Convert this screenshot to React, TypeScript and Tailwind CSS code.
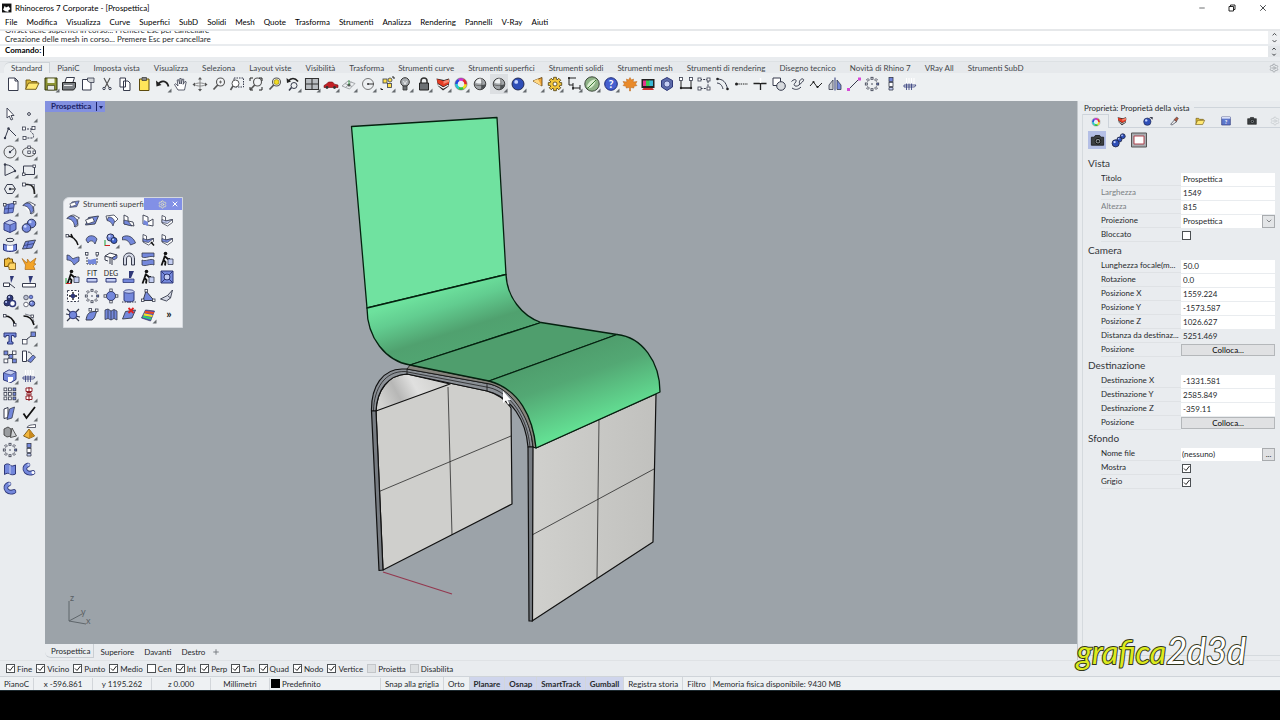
import React, { useState } from 'react';
import { Minus, X, Settings, ChevronDown, ChevronUp, Plus } from 'lucide-react';

const menus = [
  'File', 'Modifica', 'Visualizza', 'Curve', 'Superfici', 'SubD', 'Solidi', 'Mesh', 'Quote', 'Trasforma',
  'Strumenti', 'Analizza', 'Rendering', 'Pannelli', 'V-Ray', 'Aiuti',
];

const toolTabs = [
  'Standard', 'PianiC', 'Imposta vista', 'Visualizza', 'Seleziona', 'Layout viste', 'Visibilità', 'Trasforma',
  'Strumenti curve', 'Strumenti superfici', 'Strumenti solidi', 'Strumenti mesh', 'Strumenti di rendering',
  'Disegno tecnico', 'Novità di Rhino 7', 'VRay All', 'Strumenti SubD',
];

type Tool = { name: string; art: React.ReactNode; more?: boolean; active?: boolean };

const K = '#363b4c';
const B = '#7488dc';
const L = '#c3cdf2';
const N = '#2f3878';

const Sq = ({ x, y, s = 3, f = '#fff' }: { x: number; y: number; s?: number; f?: string }) => (
  <rect x={x} y={y} width={s} height={s} fill={f} stroke={K} strokeWidth=".8" />
);

const hues = ['#f0e020', '#30c840', '#20c8d8', '#2848e0', '#d030d0', '#e82828'];
const Wheel = () => (
  <>
    {hues.map((hue, i) => (
      <circle key={hue} cx="9" cy="9" r="4.6" fill="none" stroke={hue} strokeWidth="2.6" pathLength="6"
        strokeDasharray="1.05 4.95" strokeDashoffset={-i} />
    ))}
    <circle cx="9" cy="9" r="6.1" fill="none" stroke="#444" strokeWidth=".4" />
  </>
);

const Ball = ({ cx = 9, cy = 9, r = 6, f = '#2f4fb8', hi = '#c8d6ff' }: { cx?: number; cy?: number; r?: number; f?: string; hi?: string }) => (
  <>
    <circle cx={cx} cy={cy} r={r} fill={f} stroke="#1c2344" strokeWidth=".9" />
    <circle cx={cx - r * 0.3} cy={cy - r * 0.35} r={r * 0.32} fill={hi} />
  </>
);

const GreyBall = () => (
  <>
    <circle cx="9" cy="9" r="5.800" fill="#a2a6a9" stroke="#333" strokeWidth=".9" />
    <path d="M4.500 7.500a5 5 0 0 1 6.500-3.700v4.200c-2 .8-4.500.8-6.500-.5z" fill="#eef0f1" />
    <path d="M3.200 9.500c3 1.500 8.500 1.500 11.600 0M10 3.200c1.200 3 1.200 8.500 0 11.600" fill="none" stroke="#555" strokeWidth=".7" />
    <path d="M10.500 10.300 14.500 9.800a5.500 5.500 0 0 1-4.200 4.700z" fill="#4d5154" />
  </>
);

const Lens = () => (
  <>
    <circle cx="10.500" cy="7" r="4" fill="#f2f4f6" stroke="#555" strokeWidth="1.100" />
    <path d="M7.700 10 3.500 14.500" stroke="#555" strokeWidth="1.700" />
  </>
);

const Gear = () => (
  <>
    {[0, 45, 90, 135].map((a) => (
      <path key={a} d="M7.600 2.300h2.800v13.400H7.600z" fill="#f2c53a" stroke="#4a3a10" strokeWidth=".8" transform={`rotate(${a} 9 9)`} />
    ))}
    <circle cx="9" cy="9" r="4.600" fill="#f2c53a" />
    <circle cx="9" cy="9" r="2" fill="#fff" stroke="#4a3a10" strokeWidth=".8" />
  </>
);

const Camera = () => (
  <>
    <path d="M2.500 5.500h3l1.200-1.800h4.600l1.200 1.800h3v8.500h-13z" fill="#3b3f42" stroke="#111" strokeWidth=".8" />
    <circle cx="9.500" cy="9.700" r="3" fill="#8a9094" stroke="#111" />
    <circle cx="9.500" cy="9.700" r="1.300" fill="#16191b" />
  </>
);

const Folder = () => (
  <>
    <path d="M3 14V5h4l1.500 1.500H14V8" fill="#d9b93a" stroke="#6a5410" strokeWidth=".9" />
    <path d="M2.500 14.300 5.500 8h10.500l-3 6.300z" fill="#ffe873" stroke="#6a5410" strokeWidth=".9" />
  </>
);

const Wedge = () => (
  <>
    <path d="M2.500 3.500 10 5l5-1.500.5 2.500-1 5.500-5.500 4-5-4.500z" fill="#2b2626" />
    <path d="m3 4 6.500 2L15 4.500v4l-5.500 3L3.500 8z" fill="#e43d25" />
    <path d="M9.500 6 15 4.500v2.300L9.500 9z" fill="#f58a74" />
    <path d="m4 9.800 5.200 3.200 5-2.800" fill="none" stroke="#fff" strokeWidth="1.100" />
  </>
);

const PolarArray = () => (
  <>
    {[0, 45, 90, 135, 180, 225, 270, 315].map((a) => (
      <rect key={a} x="8" y="2.300" width="2" height="2" fill={a === 90 ? B : '#fff'} stroke={K} strokeWidth=".8"
        transform={`rotate(${a} 9 9)`} />
    ))}
    <circle cx="9" cy="9" r=".8" fill={K} />
  </>
);

const Column = () => (
  <>
    <Sq x={7} y={2.500} s={4} f={B} />
    <Sq x={7} y={7.500} s={4} />
    <path d="M7 12.500h4v2.500H7z" fill={L} stroke={K} strokeWidth=".8" />
  </>
);

// bent surface patch shared by most of the surface tools
const Sheet = ({ f = B }: { f?: string }) => (
  <>
    <path d="M3 6.500C5 4 7.500 3 10 3l5.500 3-2 1.500.5 6-3 1.500" fill="#fff" stroke={K} strokeWidth=".8" />
    <path d="M3 6.500C4.500 4.500 6.500 4 8 4c3 .5 5.500 3.500 5.500 8l-3 3c0-4.500-2.500-8-7.500-8.500z" fill={f} stroke={K} strokeWidth=".8" />
  </>
);

const Plane = () => (
  <path d="m2.500 13 3-7.500 10-1.500-3.500 8z" fill={B} stroke={K} strokeWidth=".9" />
);

const Seat = ({ f = B }: { f?: string }) => (
  <>
    <path d="M4 3.500 7.500 5v4l7-1.500v3l-5 3.500L4 11z" fill="#fff" stroke={K} strokeWidth=".8" />
    <path d="M4 7.500 8 9l6.500-1.500-5 4L4 10.500z" fill={f} stroke={K} strokeWidth=".7" />
  </>
);

const Walker = () => (
  <>
    <circle cx="7.500" cy="3.500" r="1.800" fill="#111" />
    <path d="M7 5.500 5.500 10l2 2L7 15.500M5.500 10 3.500 15.500M7 6.500l3 2.500h2" fill="none" stroke="#111" strokeWidth="1.800" />
    <path d="M10 9h5v5.500h-5z" fill={L} stroke={K} strokeWidth=".8" />
  </>
);

const Pipe = ({ open }: { open?: boolean }) => (
  <>
    <path d="M8 5C4.500 6 4 9.500 6 11.500S10.500 13.500 13 12.500" fill="none" stroke={N} strokeWidth="4.600" strokeLinecap="round" />
    <path d="M8 5C4.500 6 4 9.500 6 11.500S10.500 13.500 13 12.500" fill="none" stroke={B} strokeWidth="3" strokeLinecap="round" />
    <circle cx="8.500" cy="4.700" r="1.200" fill={L} />
    {open && <circle cx="13" cy="12.500" r="1.500" fill="#fff" />}
  </>
);

const Prongs = () => (
  <>
    <path d="M5.500 3v8M8 3v8M10.500 3v8M13 3v8" stroke="#fff" strokeWidth="1.100" />
    <path d="M3 10h12l-1.500 2H3zM5.500 8.500V15M8 8.500V15M10.500 8.500V15" fill="none" stroke={N} strokeWidth=".8" />
  </>
);

const line = { fill: 'none', stroke: K, strokeWidth: 1 };

const standardTools: Tool[] = [
  { name: 'Nuovo', art: <path d="M4.500 3H11l3 3v9.500H4.500zM11 3v3h3" fill="#fff" stroke={K} /> },
  { name: 'Apri', art: <Folder /> },
  { name: 'Salva', more: true, art: <><path d="M3 3h12v12H3z" fill="#8b9232" stroke="#33360f" /><path d="M5.500 3.500h7V8h-7z" fill="#f1f3e4" /><path d="M5.500 10.500h7V15h-7z" fill="#e5e7e9" stroke="#33360f" strokeWidth=".6" /></> },
  { name: 'Stampa', art: <><path d="M5 7 6.500 2.500h8L13 7" fill="#fff" stroke={K} /><path d="M2.500 7.500h13v5l-2 2.500h-11z" fill="#7c8084" stroke="#222" /><path d="M4 10.500h8.500" stroke="#eee" /></> },
  { name: 'Proprietà documento', art: <><path d="M3.500 4.500h8.500V15H3.500z" fill="#fff" stroke={K} /><path d="M8.500 3h6.500v4.500h-4L8.500 6z" fill="#d3d6d9" stroke={K} strokeWidth=".8" /></> },
  { name: 'Taglia', art: <><path d="m6 3 5 9.500M12 3 7 12.500" stroke="#555" strokeWidth="1.200" /><circle cx="6" cy="13.500" r="1.200" {...line} /><circle cx="12" cy="13.500" r="1.200" {...line} /></> },
  { name: 'Copia', art: <path d="M4 3h5.500v9H4zM7.500 6h4.500l2 2v7.500H7.500z" fill="#fff" stroke={K} /> },
  { name: 'Incolla', art: <><path d="M4.500 4h9.500v11.500H4.500z" fill="#ffe55a" stroke="#5c4a0c" /><path d="M7 2.500h4.500v3H7z" fill="#888" stroke="#333" strokeWidth=".7" /></> },
  { name: 'Annulla', more: true, art: <><path d="M4 9.500c3-5 9-4 10.500 2" fill="none" stroke="#222" strokeWidth="1.800" /><path d="m2 5.500.5 6 5-1.500z" fill="#222" /></> },
  { name: 'Panoramica', art: <path d="M6 15 2.500 9.500l1.300-.8L6 11 5.200 5l1.300-.4L7.800 9V3.500h1.400V9l1.300-5 1.300.3-.6 5 1.800-3 1.200.6L12.500 15z" fill="#fff" stroke={K} strokeWidth=".8" /> },
  { name: 'Ruota vista', art: <><path d="M3 9.500c3-2 9-2 12 0-3 2-9 2-12 0zM9 4v11" {...line} stroke="#888" /><path d="m7 4.500 2-2.500 2 2.500zM7 14l2 2.500 2-2.500zM4 7.500l-2.500 2 2.500 2zM14 7.500l2.500 2-2.500 2z" fill="#555" /></> },
  { name: 'Zoom dinamico', art: <><Lens /><path d="M9 7h3M10.500 5.500v3" stroke="#555" strokeWidth=".8" /></> },
  { name: 'Zoom finestra', art: <><path d="M6 3h9.500v9H6z" {...line} strokeDasharray="1.500 1" /><circle cx="7.500" cy="8.500" r="3.500" fill="#fff" stroke="#555" /><path d="m5 11-2.500 4" stroke="#555" strokeWidth="1.600" /></> },
  { name: 'Zoom estensione', art: <><Lens /><path d="M3 6V3h3M12 3h3v3M15 12v3h-3M3 12v3h3" {...line} stroke="#222" /></> },
  { name: 'Zoom selezionati', art: <><Lens /><circle cx="10.500" cy="7" r="2.500" fill="#f2dc20" stroke="#8a7a10" strokeWidth=".6" /></> },
  { name: 'Annulla vista', more: true, art: <><path d="M4 6.500c3-4 7-4 10 0" {...line} stroke="#222" strokeWidth="1.600" /><path d="m2.500 3 .5 5 4-1.500z" fill="#222" /><circle cx="10" cy="10.500" r="3" {...line} /><path d="m7.500 12.500-2.500 3" {...line} strokeWidth="1.500" /></> },
  { name: '4 viste', more: true, art: <path d="M2.500 3.500h13v11h-13zM9 3.500v11M2.500 9h13" fill="#b9bdc1" stroke="#333" strokeWidth="1.100" /> },
  { name: 'Visualizza auto', more: true, art: <><path d="M2 10.500 4.500 9l2-2h4l2 2.200 3.500.8v2.500H2z" fill="#c41f25" stroke="#6d0d10" strokeWidth=".6" /><circle cx="5" cy="12.500" r="1.400" fill="#333" /><circle cx="12.500" cy="12.500" r="1.400" fill="#333" /></> },
  { name: 'Piano di costruzione', more: true, art: <><path d="m2 11 6-5 7 2.500L9.500 14zM5 8.500l7 3M11.500 7l-6 5.500" fill="none" stroke="#9a9da0" strokeWidth=".9" /><circle cx="9" cy="10" r="1.500" fill="#555" /><path d="M9 10V5" stroke="#1b8f2c" strokeWidth=".7" /></> },
  { name: 'Cerchio', more: true, art: <><circle cx="9" cy="9" r="5.500" fill="none" stroke="#777" /><path d="M9 9h6" stroke="#333" /><circle cx="9" cy="9" r="1" fill="#333" /></> },
  { name: 'Osnap', more: true, art: <><Sq x={5} y={4} s={4} f="#ffe04a" /><Sq x={9.500} y={8.500} s={4} f="#ffe04a" /><circle cx="12" cy="5" r="2" fill="#ffe04a" stroke={K} strokeWidth=".8" /><path d="M3 13v1.500h2M14 2h2v2" {...line} stroke="#222" /></> },
  { name: 'Nascondi', more: true, art: <><circle cx="9" cy="7" r="4.300" fill="#a9adb1" stroke="#333" /><path d="M7 11h4v4H7z" fill="#6b6f72" stroke="#333" strokeWidth=".8" /><path d="M7.500 6 9 9.500 10.500 6" {...line} stroke="#fff" strokeWidth=".7" /></> },
  { name: 'Blocca', more: true, art: <><path d="M6 8V6c0-4 6-4 6 0v2" fill="none" stroke="#333" strokeWidth="1.500" /><path d="M4.500 8h9v7h-9z" fill="#6c7074" stroke="#222" /></> },
  { name: 'Livelli', more: true, art: <Wedge /> },
  { name: 'Proprietà', more: true, art: <Wheel /> },
  { name: 'Ombreggia', art: <GreyBall /> },
  { name: 'Vista ombreggiata', more: true, active: true, art: <GreyBall /> },
  { name: 'Render', more: true, art: <Ball /> },
  { name: 'Faretto', more: true, art: <><path d="m6 6 9-3.500V11z" fill="#f0a83c" stroke="#5c3a08" strokeWidth=".8" /><path d="m6 6 5-2 3.500 7z" fill="#ffd987" /></> },
  { name: 'Opzioni', more: true, art: <Gear /> },
  { name: 'Quote', more: true, art: <><path d="M3 3h8M4 3v7h4M8 8v7M15 10v5M8 13h7" {...line} stroke="#222" /><circle cx="4" cy="3" r="1" fill="#222" /><circle cx="8" cy="13" r="1" fill="#222" /></> },
  { name: 'Grasshopper', more: true, art: <><circle cx="9" cy="9" r="7.200" fill="#8fb287" stroke="#3e4a3c" /><path d="M4 11c2-5 5-6.500 9-6.500-1 5-3 8-7.500 9z" fill="#d9edcf" /><path d="M4.500 13.500 13 5" stroke="#3c7a34" /></> },
  { name: 'Aiuti', more: true, art: <><circle cx="9" cy="9" r="6.300" fill="#4560cf" stroke="#1c2a78" /><text x="9" y="13" textAnchor="middle" fontSize="11" fontWeight="700" fill="#fff">?</text></> },
  { name: 'V-Ray', art: <path d="m9 2.500 1.500 2.500 2-1-.3 3L16 6.500 14.500 9l1.500 1.500-3.500 1 .5 1.500-3.500-.5V16h-1v-3.500L5 13l.5-1.500-3.500-1L3.500 9 2 6.500 5.800 7l-.3-3 2 1z" fill="#e98a2a" stroke="#b8641a" strokeWidth=".5" /> },
  { name: 'Finestra di rendering', art: <><path d="M2.500 4h13v9h-13z" fill="#222" /><path d="M4 5.500h3.500v5.500H4z" fill="#e6338e" /><path d="M7 5.500h4v5.500H7z" fill="#38c850" /><path d="M10.500 5.500H14v5.500h-3.500z" fill="#38b8d8" /><path d="M3 15l1.500-2h9l1.500 2z" fill="#c33" /></> },
  { name: 'Blocco', art: <><path d="m9 2.500 5.500 3v6.500L9 15.500 3.500 12V5.500z" fill="#5d6cab" stroke={N} /><circle cx="9" cy="9" r="3" fill="#c7d0f4" stroke={N} strokeWidth=".7" /></> },
  { name: 'Quota lineare', art: <><path d="M4 4v9h10V4M4 13h10" {...line} stroke="#222" /><Sq x={2.500} y={2.500} /><Sq x={12.500} y={2.500} /><circle cx="4" cy="13" r="1.200" fill="#222" /><circle cx="14" cy="13" r="1.200" fill="#222" /></> },
  { name: 'Punti di controllo', art: <><path d="M5 4.500h8v9H5" {...line} strokeDasharray="2 1.200" /><Sq x={3} y={3} /><Sq x={12} y={3} /><Sq x={3} y={12} /><Sq x={12} y={12} /></> },
  { name: 'Raccorda', art: <><path d="M3 4c6 0 9 3 10.500 10M3 8c3 .3 5 2 6 6" {...line} /><circle cx="3.500" cy="4" r="1.300" fill="#222" /><circle cx="13.500" cy="14" r="1.300" fill="#222" /></> },
  { name: 'Estendi', art: <><path d="M3 9h12" stroke="#222" strokeDasharray="1.500 .8" strokeWidth="1.200" /><circle cx="3.500" cy="9" r="1.500" fill="#222" /></> },
  { name: 'Tronca', art: <><path d="M2.500 8.500h13M9.500 8.500V15" {...line} stroke="#222" strokeWidth="1.300" /><path d="M9.500 3v5" stroke="#fff" strokeWidth="1.500" /></> },
  { name: 'Unione booleana', art: <><path d="M3 3h7.500v7.500H3z" fill="#fff" stroke={K} /><circle cx="11" cy="11" r="4.300" fill="#d7dade" stroke={K} /></> },
  { name: 'Curva interpolata', art: <path d="M2.500 6.500c4-4 6-1 3.500 1.500s1 4.500 4 2 6-5 4-6-5 3-3 5M3 13c3 2 6 2 9-1" {...line} /> },
  { name: 'Polilinea', art: <><path d="M3 11 6.500 7l4 5.500L15 8" {...line} stroke="#222" /><circle cx="6.500" cy="7" r="1.100" fill="#222" /><circle cx="10.500" cy="12" r="1.100" fill="#222" /></> },
  { name: 'Specchio', art: <><path d="M3 14.500V10l4-5v9.500z" fill="#c8cbd0" stroke={K} strokeWidth=".8" /><path d="M15 14.500V10l-4-5v9.500z" fill={B} stroke={K} strokeWidth=".8" /><path d="M9 2.500v13" stroke={N} /></> },
  { name: 'Linea', art: <><path d="M3.500 14.500 14 4" {...line} /><path d="M2 13h3v3H2zM13 2.500h3v3h-3z" fill="#d64ad6" /></> },
  { name: 'Serie polare', art: <PolarArray /> },
  { name: 'Serie lineare', art: <Column /> },
  { name: 'Proietta', art: <Prongs /> },
];

const sideTools: (Tool | null)[] = [
  { name: 'Seleziona', art: <path d="M6 3v10l2.300-2 1.700 4 1.700-.7L10 10.500h3z" fill="#fff" stroke={K} strokeWidth=".9" /> },
  { name: 'Punto', more: true, art: <circle cx="9" cy="9" r="1.400" fill="#fff" stroke={K} /> },
  { name: 'Polilinea', more: true, art: <><path d="m4 14 3.500-9.500L15 12" {...line} /><circle cx="4" cy="14" r="1.200" fill={K} /><circle cx="7.500" cy="4.500" r="1.200" fill={K} /></> },
  { name: 'Curva', more: true, art: <><path d="M4 5h9c-7 3 3 3 0 9H5" {...line} strokeDasharray="2 1" /><Sq x={2.500} y={3} /><Sq x={12} y={2.500} /><Sq x={3} y={12.500} /></> },
  { name: 'Cerchio', more: true, art: <><circle cx="9" cy="9" r="6" {...line} stroke="#555" /><path d="m9 9 4-3.500" {...line} /><circle cx="9" cy="9" r="1.200" fill={K} /></> },
  { name: 'Ellisse', more: true, art: <><ellipse cx="9" cy="9" rx="6.500" ry="4.500" {...line} stroke="#555" /><Sq x={7.800} y={3} s={2.500} /><Sq x={7.800} y={8} s={2.500} /><Sq x={13} y={8} s={2.500} /></> },
  { name: 'Arco', more: true, art: <><path d="M4 3.500v11M4 3.500C9 4 12.500 6 14 10M4 14.500 14 10" {...line} /><circle cx="4" cy="3.500" r="1.200" fill={K} /><circle cx="14" cy="10" r="1.200" fill={K} /></> },
  { name: 'Rettangolo', more: true, art: <><path d="M3.500 5h11v8.500h-11z" {...line} /><Sq x={2.500} y={12} s={2.500} /><Sq x={13} y={4} s={2.500} /></> },
  { name: 'Poligono', more: true, art: <><path d="M3.500 9 6 4.500h5.500L14.500 9l-3 4.500H6z" {...line} /><path d="M9 9h5" {...line} stroke="#222" /><circle cx="9" cy="9" r="1.200" fill={K} /></> },
  { name: 'Raccordo', more: true, art: <><path d="M4 4.500h4c4 0 6.500 3 6.500 9.500" {...line} stroke="#222" strokeWidth="1.700" /><path d="M8 4.500h6.500V9" {...line} strokeWidth=".6" /><Sq x={2.500} y={3} /></> },
  { name: 'Superficie da punti', more: true, art: <><path d="m4 6 9.500-2L12 13.500l-9 1zM8 5l-1 9.500M3.500 10l9-1" fill={B} stroke={N} strokeWidth=".8" /><Sq x={12.500} y={2.500} s={2.500} /><Sq x={2.500} y={4.500} s={2.500} /></> },
  { name: 'Superfici', more: true, art: <Sheet /> },
  { name: 'Parallelepipedo', more: true, art: <><path d="m3 6 6-3 6 2.500v7l-6 3-6-2.500z" fill={B} stroke={N} /><path d="m3 6 6 2 6-2.500L9 3z" fill={L} stroke={N} strokeWidth=".7" /><path d="M9 8v7.500" stroke={N} strokeWidth=".7" /></> },
  { name: 'Sfera', more: true, art: <><Ball cx={11.500} cy={6.500} r={4.300} f={B} /><Ball cx={6.500} cy={11} r={4.300} f={B} /></> },
  { name: 'Superficie di rivoluzione', more: true, art: <><ellipse cx="9" cy="4" rx="4" ry="1.700" {...line} /><path d="M2.500 8c4 2 9 2 13 0v6c-4 2-9 2-13 0z" fill={B} stroke={N} /><path d="M6 9.200c2 .4 4 .4 6 0v5c-2 .4-4 .4-6 0z" fill="#fff" /></> },
  { name: 'Superficie piana', more: true, art: <><Plane /><path d="m4 9.500 10-2M8.500 5.500l-2 7" stroke={N} strokeWidth=".8" /></> },
  { name: 'Unisci', art: <><path d="M3.500 4h3v-1h2v1h3v3h1v2h-1v2.500h-8z" fill="#f1bd3c" stroke="#75500a" /><path d="M8 8h6.500v6.500H8V12H7v-2h1z" fill="#ffd768" stroke="#75500a" strokeWidth=".8" /></> },
  { name: 'Esplodi', art: <path d="m2 3.500 5 4.500.5-4L10 7.500 16 3l-2 5.500 2 .5-2.500 2 1.500 3.500H5L5.500 10z" fill="#f3a427" stroke="#a4600a" strokeWidth=".6" /> },
  { name: 'Tronca', art: <><path d="M9 3h4l-3 7z" fill={N} /><path d="M2.500 10h6v3.500h-6zM9 11l5 4" fill="#fff" stroke={K} /></> },
  { name: 'Suddividi', art: <><path d="M8.500 3h4.500l-3 8z" fill={N} /><path d="M2.500 10.500h13V14h-13z" fill="#fff" stroke={K} /></> },
  { name: 'Raggruppa', more: true, art: <><Ball cx={9} cy={6} r={3} f={N} /><Ball cx={6} cy={11} r={3} f={N} /><circle cx="11.500" cy="11.500" r="3" fill="#fff" stroke={N} strokeWidth="1.500" /></> },
  { name: 'Separa', art: <><circle cx="6" cy="5.500" r="2.300" fill="#b9bed0" stroke={K} strokeWidth=".7" /><Ball cx={12} cy={11.500} r={2.700} f={B} /><circle cx="11" cy="5" r="1.800" fill={B} stroke={N} strokeWidth=".7" /><circle cx="6" cy="12.500" r="2.300" fill="#fff" stroke={K} strokeWidth=".7" /></> },
  { name: 'Modifica punti', art: <><path d="M3.500 5c5 0 9 3 10.500 9" {...line} stroke="#111" strokeWidth="1.700" /><Sq x={2.500} y={3.500} s={2.500} /><Sq x={12.500} y={12.500} s={2.500} /></> },
  { name: 'Modifica curva', more: true, art: <><path d="M3.500 5c5 0 9 3 10.500 9" {...line} stroke="#111" strokeWidth="1.500" /><path d="m5 3 7 2 2 6" {...line} strokeWidth=".6" /><Sq x={11} y={4} s={2.500} /></> },
  { name: 'Testo', art: <path d="M3 4h12v4h-2V6.500h-2.500V13H12v2H6.500v-2H8V6.500H5V8H3z" fill={B} stroke={N} /> },
  { name: 'Sposta', more: true, art: <><Sq x={2.500} y={10.500} s={4.500} /><Sq x={11} y={3} s={4.500} f={B} /><path d="m7 10 4-3" {...line} /></> },
  { name: 'Copia oggetti', art: <><path d="m5 5 8 8M5 13l7-8" {...line} /><Sq x={3} y={3} s={3.800} f={B} /><Sq x={8} y={6.500} s={3.800} f={B} /><Sq x={11.500} y={3} s={3.500} /><Sq x={3} y={11} s={3.800} /><Sq x={11.500} y={11} s={3.800} f={B} /></> },
  { name: 'Ruota', art: <><path d="M2.500 3h4v10.500h-4z" fill="#fff" stroke={K} /><path d="m7.500 13 5.500-6 2.500 2L11 14.500z" fill={B} stroke={K} strokeWidth=".8" /><path d="M8 4c2 0 3 1 3.500 2.500" {...line} /></> },
  { name: 'Strumenti solidi', more: true, art: <><path d="m2.500 6 5.500-3 7 2v7.500L10 15.500 2.500 13z" fill={B} stroke={N} /><path d="m2.500 6 7.500 2 5-3-7-2z" fill={L} stroke={N} strokeWidth=".6" /><path d="M7 10h5v3l-2 2H7z" fill="#fff" /></> },
  { name: 'Proietta curve', more: true, art: <Prongs /> },
  { name: 'Serie', more: true, art: <>{[3, 7.500, 12].map((y) => [3, 7.500, 12].map((x) => <Sq key={`${x}-${y}`} x={x} y={y} s={2.800} f={x > 10 ? B : '#fff'} />))}</> },
  { name: 'Allinea', more: true, art: <path d="M6 3h6v3.500H6zM7 7.500h4V10H7zM6 11h6v3.500H6zM9 2v14" fill="#fff" stroke="#8e1f27" /> },
  { name: 'Trasforma', more: true, art: <><path d="m3 5 4-1.500v10L3 14.500z" fill="#fff" stroke={K} /><path d="m8.500 5 5-2L11 14l-5 1.500z" fill={B} stroke={K} strokeWidth=".8" /></> },
  { name: 'Analizza', more: true, art: <path d="m3.500 9.500 3 4.500L15 3" fill="none" stroke="#111" strokeWidth="1.800" /> },
  { name: 'Mesh', more: true, art: <><path d="m3 6 4-2 3 2v7l-4 1-3-2z" fill="#9a9da0" stroke="#333" strokeWidth=".8" /><path d="m11 5 4.500 8-6 1.500z" fill="#cfd2d4" stroke="#333" strokeWidth=".8" /></> },
  { name: 'Piramide', more: true, art: <><path d="m9 6 5.500 7L9 15.500 3.500 13z" fill="#f1b53c" stroke="#664608" strokeWidth=".8" /><path d="m9 6 5.500 7L9 15.500z" fill="#c98a1e" /><path d="M7 4.500C8 2 11 2 15.500 1.500v3H11z" fill="#fff" stroke={K} strokeWidth=".8" /></> },
  { name: 'Serie polare', art: <PolarArray /> },
  { name: 'Serie lineare', art: <Column /> },
  { name: 'Estrudi', art: <><path d="M3.500 5c2-1.500 4-1.500 5.500 0s3.500 1 5.500 0v9c-2 1-4 1-5.500 0s-3.500-1-5.500.5z" fill={B} stroke={N} /><path d="M9 5v9" stroke={L} /></> },
  { name: 'Tubo', art: <Pipe open /> },
  { name: 'Tubo chiuso', art: <Pipe /> },
  null,
];

const surfaceTools: Tool[] = [
  { name: 'Da 2, 3 o 4 curve', art: <Sheet /> },
  { name: 'Da punti', art: <><Plane /><path d="m2.500 8 7-2.500 2 4-7 2.500z" fill="#fff" stroke={K} strokeWidth=".8" /></> },
  { name: 'Da curve di contorno', art: <><path d="m4 4 8-1 4 4-3 3-8-2z" fill="#fff" stroke={K} strokeWidth=".8" /><path d="M6.500 5C10 5 12 7 12.500 9.500L11 14c-1-3-3-5-6-5.500z" fill={B} stroke={K} strokeWidth=".7" /></> },
  { name: 'Patch angolare', art: <><path d="M4 3v9l10 2-1-4-5-1V5z" fill="#fff" stroke={K} strokeWidth=".9" /><path d="m4 8 4 1 4 5-8-2z" fill={B} stroke={K} strokeWidth=".7" /></> },
  { name: 'Raccordo variabile', art: <><path d="M4 3v9l10 2V7l-5 3V5z" fill="#fff" stroke={K} strokeWidth=".9" /><path d="m5 8 4 2v4l-5-2z" fill={B} /></> },
  { name: 'Unione superfici', art: <Seat f={L} /> },
  { name: 'Raccordo curve', more: true, art: <><path d="M3 5c5 0 9 3 11 9M7 3l2 4" {...line} stroke="#111" strokeWidth="1.500" /><Sq x={2} y={3.500} s={2.500} /></> },
  { name: 'Smusso', art: <path d="M3 9c1-5 8-6 11-1l-2 5C10 9 7 9 5 12z" fill={B} stroke={K} strokeWidth=".8" /> },
  { name: 'Superficie tra curve', more: true, art: <><Ball cx={8.500} cy={6.500} r={3.600} f={B} /><Ball cx={12} cy={9.500} r={3} f="#3f63cc" /><path d="M3 15V9" stroke="#1b9a35" /><path d="M3 14.500h5" stroke="#c22" /></> },
  { name: 'Offset superficie', art: <path d="M2.500 6c5-3 11 0 13 6l-5 2C9 10 6 8 2.500 9z" fill={B} stroke={K} strokeWidth=".8" /> },
  { name: 'Estendi superficie', art: <><Seat f={B} /><path d="m12 11 3 3.500" {...line} stroke="#111" strokeWidth="1.500" /></> },
  { name: 'Superficie tangente', art: <Seat f={B} /> },
  { name: 'Miscela', art: <path d="M3 5c3 0 4 2 6 4 1-1 4-2 6-2v4l-5 4C8 11 6 10 3 10z" fill={B} stroke={K} strokeWidth=".8" /> },
  { name: 'Allinea bordi', art: <><path d="M4 4v10h10V4" {...line} strokeDasharray="2 1" /><path d="M5 9c3 2 5-1 8 0v5H5z" fill={B} /><Sq x={2.500} y={2.500} s={2.500} /><Sq x={13} y={2.500} s={2.500} /></> },
  { name: 'Solido di supporto', art: <><path d="m3 6 5-3 7 2-5 3zM3 6v4l3 1M10 8v7M8 7.500V14" fill="#fff" stroke={K} /><path d="m10 8 5-3v3l-3 2z" fill={B} stroke={K} strokeWidth=".7" /></> },
  { name: 'Arco', art: <path d="M3.500 15V9c0-8 11-8 11 0v6h-3V9c0-4-5-4-5 0v6z" fill="#d5d9e6" stroke={K} /> },
  { name: 'Fondi', art: <path d="M3 3h12v4c-4-2-8 2-12 0zM3 10c4 2 8-2 12 0v5c-4-2-8 2-12 0z" fill={B} stroke={K} strokeWidth=".8" /> },
  { name: 'Trasporta', art: <Walker /> },
  { name: 'Storia', art: <><Walker /><path d="M2 16V10" stroke="#1b9a35" /><path d="M2 15.500h5" stroke="#c22" /></> },
  { name: 'Adatta', art: <><text x="9" y="8" textAnchor="middle" fontSize="7" fill="#222">FIT</text><path d="M4 10.500h10v3.500H4z" fill={L} stroke={N} /></> },
  { name: 'Grado', art: <><text x="9" y="8" textAnchor="middle" fontSize="7" fill="#222">DEG</text><path d="M4 10.500h10v3.500H4z" fill={L} stroke={N} /></> },
  { name: 'Taglia superficie', art: <><path d="M9 3h5l-3 7H9z" fill={N} /><path d="M3 11h11v3.500H3z" fill={B} stroke={N} strokeWidth=".8" /></> },
  { name: 'Ricostruisci', art: <Walker /> },
  { name: 'Patch', art: <><path d="M3 3h12v12H3z" fill={B} stroke={N} /><path d="M3 3l4 4M15 3l-4 4M3 15l4-4M15 15l-4-4" stroke={N} /><circle cx="9" cy="9" r="3" fill={L} stroke={N} /></> },
  { name: 'Punti di controllo', art: <><path d="M3.500 3.500h11v11h-11z" fill="#fff" stroke={K} strokeDasharray="2 1.500" /><path d="M9 5v8M5 9h8" stroke="#111" strokeWidth="1.300" /><circle cx="9" cy="9" r="2.300" fill={N} /></> },
  { name: 'Bordo', art: <PolarArray /> },
  { name: 'Punto cucitura', art: <><circle cx="9" cy="9" r="4.500" fill={B} stroke={N} /><Sq x={7.800} y={2} s={2.400} /><Sq x={7.800} y={13.500} s={2.400} /><Sq x={2} y={7.800} s={2.400} /><Sq x={13.500} y={7.800} s={2.400} /></> },
  { name: 'Cilindro', art: <><path d="M4 4.500v9c3 2 7 2 10 0v-9" fill={B} stroke={N} /><ellipse cx="9" cy="4.500" rx="5" ry="1.800" fill={L} stroke={N} strokeWidth=".8" /><path d="M2 15h14" stroke={K} strokeDasharray="1.500 1" /></> },
  { name: 'Cono tangente', art: <><path d="m4 13.500 3-9.500 8 9.500z" fill={B} stroke={K} /><Sq x={2.500} y={12} s={2.500} /><Sq x={6} y={2.500} s={2.500} /><Sq x={13.500} y={12} s={2.500} /></> },
  { name: 'Sviluppa', art: <path d="m2.500 12 7-3.500 5-5.500-2 8-4 3zM9.500 8.500l3 2.500" fill="#d5d9e6" stroke={K} strokeWidth=".9" /> },
  { name: 'Deforma', art: <><path d="m3 3 12 12M15 3 3 15M2 8l14 3" stroke={K} strokeWidth="1.200" /><circle cx="9" cy="9" r="3.800" fill={B} stroke={N} /></> },
  { name: 'Modifica superficie', art: <><path d="M3 14C4 9 5 7 8 6l6-1c-2 3-1 6-5 9z" fill={B} stroke={K} /><Sq x={6} y={2.500} s={2.500} /><Sq x={12.500} y={3} s={2.500} /></> },
  { name: 'Pieghe', art: <path d="m3 4 3-1 3 2 3-1.500L15 5v9l-3-1.500L9 14l-3-1.500-3 1zM6 3v9.500M9 5v9M12 3.500v9" fill={B} stroke={K} strokeWidth=".8" /> },
  { name: 'Annulla taglio', art: <><Plane /><path d="m8.500 2 5 5M13.500 2l-5 5" stroke="#d22" strokeWidth="1.800" /></> },
  { name: 'Analisi curvatura', more: true, art: <><path d="m2.500 12 4-8 9 1-4 10z" fill="#4a4be0" stroke={K} strokeWidth=".7" /><path d="m3.800 10.500 8.500 2.200" stroke="#2fd06a" strokeWidth="2" /><path d="m4.800 8.300 8.600 1.700" stroke="#f3e021" strokeWidth="2.200" /><path d="m6 5.800 8.800 1.200" stroke="#ea4a22" strokeWidth="2.200" /></> },
  { name: 'Altro', art: <text x="11" y="12" textAnchor="middle" fontSize="12" fontWeight="700" fill="#222">»</text> },
];

const ToolButton = ({ tool }: { tool: Tool }) => (
  <button type="button" title={tool.name} aria-label={tool.name}
    className={`flex items-center justify-center ${tool.active ? 'bg-[#dcdfe2]' : 'hover:bg-[#d4daf2]'}`}>
    <svg viewBox="0 0 18 18" className="size-[18px] shrink-0">
      {tool.art}
      {tool.more && <path d="M17.500 13.500v4h-4z" fill="#666b6f" />}
    </svg>
  </button>
);

type Row = { label: string; value?: string; kind?: 'text' | 'readonly' | 'select' | 'check' | 'button' | 'file'; dim?: boolean; checked?: boolean };

const sections: { title: string; rows: Row[] }[] = [
  {
    title: 'Vista',
    rows: [
      { label: 'Titolo', value: 'Prospettica' },
      { label: 'Larghezza', value: '1549', dim: true },
      { label: 'Altezza', value: '815', dim: true },
      { label: 'Proiezione', value: 'Prospettica', kind: 'select' },
      { label: 'Bloccato', kind: 'check' },
    ],
  },
  {
    title: 'Camera',
    rows: [
      { label: 'Lunghezza focale(m...', value: '50.0' },
      { label: 'Rotazione', value: '0.0' },
      { label: 'Posizione X', value: '1559.224' },
      { label: 'Posizione Y', value: '-1573.587' },
      { label: 'Posizione Z', value: '1026.627' },
      { label: 'Distanza da destinaz...', value: '5251.469', kind: 'readonly' },
      { label: 'Posizione', value: 'Colloca...', kind: 'button' },
    ],
  },
  {
    title: 'Destinazione',
    rows: [
      { label: 'Destinazione X', value: '-1331.581' },
      { label: 'Destinazione Y', value: '2585.849' },
      { label: 'Destinazione Z', value: '-359.11' },
      { label: 'Posizione', value: 'Colloca...', kind: 'button' },
    ],
  },
  {
    title: 'Sfondo',
    rows: [
      { label: 'Nome file', value: '(nessuno)', kind: 'file' },
      { label: 'Mostra', kind: 'check', checked: true },
      { label: 'Grigio', kind: 'check', checked: true },
    ],
  },
];

const CheckBox = ({ id, checked, disabled }: { id: string; checked?: boolean; disabled?: boolean }) => (
  <span className="relative flex size-[9px] shrink-0">
    <input id={id} type="checkbox" defaultChecked={checked} disabled={disabled}
      className="peer size-[9px] appearance-none border border-[#4c5053] bg-white disabled:border-[#c3c6c9] disabled:bg-[#dcdfe1]" />
    <svg viewBox="0 0 9 9" className="pointer-events-none absolute inset-0 hidden size-[9px] peer-checked:block">
      <path d="m2 4.500 2 2 3.500-4.500" fill="none" stroke="#222" strokeWidth="1" />
    </svg>
  </span>
);

const PropertyValue = ({ row, id }: { row: Row; id: string }) => {
  switch (row.kind) {
    case 'readonly':
      return <output id={id} className="pl-[2px]">{row.value}</output>;
    case 'check':
      return <span className="pl-px"><CheckBox id={id} checked={row.checked} /></span>;
    case 'button':
      return <button id={id} type="button" className="h-[12px] w-full border border-[#b4b7ba] bg-[#e0e1e3] leading-[10px] text-black">{row.value}</button>;
    case 'select':
      return (
        <div className="relative flex w-full min-w-0 items-center bg-white">
          <select id={id} className="h-[13px] w-full appearance-none pl-[2px]">
            <option>{row.value}</option>
            <option>Parallela</option>
          </select>
          <span className="pointer-events-none absolute right-0 flex size-[13px] items-center justify-center border border-[#a8abae] bg-[#e3e5e7]">
            <ChevronDown size={8} strokeWidth={1.5} />
          </span>
        </div>
      );
    case 'file':
      return (
        <div className="flex min-w-0 flex-1 bg-white">
          <input id={id} defaultValue={row.value} className="h-[13px] w-0 min-w-0 flex-1 px-px" />
          <button type="button" aria-label="Sfoglia" className="h-[13px] w-[13px] shrink-0 border border-[#a8abae] bg-[#e0e1e3] leading-none">...</button>
        </div>
      );
    default:
      return <input id={id} defaultValue={row.value} className="h-[13px] w-full min-w-0 bg-white px-[2px]" />;
  }
};

const panelTabs: Tool[] = [
  { name: 'Proprietà', art: <Wheel /> },
  { name: 'Livelli', art: <Wedge /> },
  { name: 'Rendering', art: <><Ball cx={8} cy={10} r={5.500} /><path d="M11 3h5v4z" fill={K} /></> },
  { name: 'Materiali', art: <><path d="m4 14 6-7 3 3-7 5z" fill="#eee" stroke={K} /><path d="m9 7 4-4 2.500 2-3 5z" fill="#b55a3c" stroke={K} strokeWidth=".8" /></> },
  { name: 'Librerie', art: <Folder /> },
  { name: 'Guida', art: <><path d="M2.500 3h13v12h-13z" fill="#5e78cc" stroke={N} /><path d="M2.500 3h13v2.500h-13z" fill="#d9e0f7" /><text x="9" y="13.500" textAnchor="middle" fontSize="8" fontWeight="700" fill="#fff">?</text></> },
  { name: 'Viste con nome', art: <Camera /> },
];

const PropertiesPanel = () => (
  <aside className="flex w-[203px] shrink-0 flex-col border-l border-[#c3c8cc] pb-1 pl-1">
    <div className="flex h-[13px] items-center gap-1 pl-[2px]">
      <h2 className="text-[8px] leading-[12px]">Proprietà: Proprietà della vista</h2>
      <span className="h-px flex-1 bg-[#cfd5db]" />
    </div>
    <div className="flex flex-1 flex-col border-b border-l border-[#d5dade]">
      <div className="flex h-[14px]">
        {panelTabs.map((tab, i) => (
          <button key={tab.name} type="button" title={tab.name} aria-label={tab.name}
            className={`flex w-[26px] items-center justify-center border-[#cdd3da] ${i === 0 ? 'border-t border-r' : 'border-b'}`}>
            <svg viewBox="0 0 18 18" className="size-3">{tab.art}</svg>
          </button>
        ))}
        <span className="flex flex-1 items-center justify-end border-b border-[#cdd3da] text-[#c0c5c9]"><Settings size={10} strokeWidth={1.5} /></span>
      </div>
      <div className="mt-[3px] flex items-center gap-[3px] pl-[5px]">
        <button type="button" aria-label="Camera" className="flex size-[18px] items-center justify-center bg-[#b4bfe6]"><svg viewBox="0 0 18 18" className="size-[17px]"><Camera /></svg></button>
        <button type="button" aria-label="Materiale" className="flex size-[18px] items-center justify-center"><svg viewBox="0 0 18 18" className="size-[17px]"><Ball cx={13.500} cy={4.500} r={2.600} /><Ball cx={10} cy={8} r={2.600} /><Ball cx={6} cy={12} r={3.800} /></svg></button>
        <button type="button" aria-label="Sfondo" className="flex size-[18px] items-center justify-center"><svg viewBox="0 0 18 18" className="size-[18px]"><path d="M1.500 2h15v14h-15z" fill="#a9adb1" stroke="#555" /><path d="M4 5h10v8H4z" fill="#fff" stroke="#b0454f" /></svg></button>
      </div>
      <form className="mt-[6px] pr-[5px]" onSubmit={(e) => e.preventDefault()}>
        {sections.map((section) => (
          <fieldset key={section.title} className="min-w-0">
            <legend className="h-[17px] pl-[5px] text-[10px] leading-[17px] text-[#33363a]">{section.title}</legend>
            {section.rows.map((row, i) => {
              const id = `${section.title}-${i}`;
              return (
                <div key={id} className="flex h-[14px] items-center pl-[18px]">
                  <label htmlFor={id}
                    className={`h-[14px] w-[80px] shrink-0 truncate border-b border-[#dfe2e5] leading-[13px] ${row.dim ? 'text-[#7b7f83]' : ''}`}>
                    {row.label}
                  </label>
                  <PropertyValue row={row} id={id} />
                </div>
              );
            })}
          </fieldset>
        ))}
      </form>
    </div>
  </aside>
);

const FloatingPalette = () => (
  <section className="absolute top-[96px] left-[18px] w-[120px] rounded-tl-md border border-[#d5d9de] bg-[#eff1f4] pb-[3px]">
    <div className="flex h-[13px] items-start">
      <svg viewBox="0 0 18 18" className="mr-[2px] ml-1 size-[13px] shrink-0"><Plane /><path d="m2.500 8 7-2.500 2 4-7 2.500z" fill="#fff" stroke={K} strokeWidth=".8" /></svg>
      <h2 className="w-[61px] text-[8px] leading-[13px] font-normal whitespace-nowrap text-[#3a3d42]">Strumenti superfi</h2>
      <span className="flex h-[12px] flex-1 items-center justify-end gap-1 bg-[#8290e6] pr-[3px] text-white">
        <button type="button" aria-label="Opzioni" className="text-[#ece9b8]"><Settings size={9} /></button>
        <button type="button" aria-label="Chiudi"><X size={8} strokeWidth={3} /></button>
      </span>
    </div>
    <div className="mt-px grid h-[112px] w-[112px] grid-cols-6 grid-rows-6">
      {surfaceTools.map((tool) => <ToolButton key={tool.name} tool={tool} />)}
    </div>
  </section>
);

const Scene = () => (
  <svg viewBox="45 101 1032 543" className="block size-full" role="img" aria-label="Sedia">
    <defs>
      <linearGradient id="bend" gradientUnits="userSpaceOnUse" x1="437" y1="291" x2="455" y2="347">
        <stop offset="0" stopColor="#6de19d" />
        <stop offset=".3" stopColor="#62cd90" />
        <stop offset=".75" stopColor="#50a16f" />
        <stop offset="1" stopColor="#51a471" />
      </linearGradient>
      <linearGradient id="front" gradientUnits="userSpaceOnUse" x1="553" y1="358" x2="578" y2="428">
        <stop offset="0" stopColor="#4f9e6d" />
        <stop offset=".35" stopColor="#53a874" />
        <stop offset="1" stopColor="#63df93" />
      </linearGradient>
      <linearGradient id="under" gradientUnits="userSpaceOnUse" x1="385" y1="410" x2="440" y2="380">
        <stop offset="0" stopColor="#d2d2d0" />
        <stop offset=".3" stopColor="#b7b7b6" />
        <stop offset=".6" stopColor="#e0e0df" />
        <stop offset="1" stopColor="#d0d0ce" />
      </linearGradient>
      <linearGradient id="leg" x1="0" y1="0" x2="1" y2="0">
        <stop offset="0" stopColor="#d0d0cd" />
        <stop offset="1" stopColor="#c1c1be" />
      </linearGradient>
    </defs>

    <g stroke="#111" strokeWidth="1.200" strokeLinejoin="round">
      <path d="M376 411C377 390 388 375 407 374L487 391C497 394 506 400 511 408L512 504 383 570Z" fill="#cfcfcc" />
      <path d="M376 411C377 390 388 375 407 374L450 384Z" fill="url(#under)" />
      <path d="M448 387 452 535M378 492l133-56" fill="none" strokeWidth=".7" />
      <path d="M371.500 411C371 386 383 369 402 369h5l83 15c24 6 41 34 43 63h-5c-2-26-16-50-41-56l-80-17c-19 1-30 16-31 37z" fill="#8b9096" />
      <path d="M373.500 411C374 388 385 371 405 371.500l84 16c22 5 39 32 41 59.500" fill="none" strokeWidth=".7" />
      <path d="M407 369v5M487 382v9" fill="none" strokeWidth=".8" />
      <path d="M410 365 489 381C520 388 533 418 536 448L533 447C532 425 515 390 490 384L407 369Z" fill="#86847c" strokeWidth=".8" />
      <path d="M371.500 411h4.500l7 159-4 .5z" fill="#777c82" />
      <path d="M536 448 656 394 653 542 532 621 532.500 447Z" fill="url(#leg)" />
      <path d="M528 447h5l-.5 174h-3.500z" fill="#777c82" />
      <path d="M599 419 597 578M532 535l122-66" fill="none" strokeWidth=".7" />
    </g>

    <g stroke="#04210f" strokeWidth="1.300" strokeLinejoin="round">
      <path d="M351.500 126.500 497 117.500 506 274.500 367 308Z" fill="#70e2a0" />
      <path d="M506 274.500C507 297 522 316 541 322.500L410 365C386 361 367 338 367 308Z" fill="url(#bend)" />
      <path d="M541 322.500 617 334.500 489 381 410 365Z" fill="#4f9e6d" />
      <path d="M617 334.500C642 337 660 362 660 392L536 448C533 417 519 389 489 381Z" fill="url(#front)" />
    </g>

    <path d="m383 572 69 22" stroke="#93384f" strokeWidth="1.200" />
    <path d="M503 391v12l3-2.500 2 4 1.500-.8-2-3.700h3.500z" fill="#fff" />

    <path d="M69 601v20l17 3M69 621l13-7" fill="none" stroke="#5f666b" />
    <g fontSize="9" fill="#596065">
      <text x="70" y="601">z</text>
      <text x="81" y="615">y</text>
      <text x="86" y="624">x</text>
    </g>
  </svg>
);

const viewTabs = ['Prospettica', 'Superiore', 'Davanti', 'Destro'];

const snaps = [
  { label: 'Fine', on: true }, { label: 'Vicino', on: true }, { label: 'Punto', on: true }, { label: 'Medio', on: true },
  { label: 'Cen' }, { label: 'Int', on: true }, { label: 'Perp', on: true }, { label: 'Tan', on: true },
  { label: 'Quad', on: true }, { label: 'Nodo', on: true }, { label: 'Vertice', on: true },
  { label: 'Proietta', off: true }, { label: 'Disabilita', off: true },
];

const modes = [
  { label: 'Snap alla griglia' }, { label: 'Orto' }, { label: 'Planare', on: true }, { label: 'Osnap', on: true },
  { label: 'SmartTrack', on: true }, { label: 'Gumball', on: true }, { label: 'Registra storia' }, { label: 'Filtro' },
];

export default function App() {
  const [view, setView] = useState('Prospettica');

  return (
    <div className="relative flex min-h-screen flex-col bg-[#e9ecef] font-['Lato','Open_Sans',sans-serif] text-[8px] leading-[12px] text-[#26292c]">
      <header className="bg-white">
        <div className="flex h-[15px] items-center pl-[2px]">
          <svg viewBox="0 0 18 18" className="mr-[3px] size-[10px]"><path d="M0 1h17v16H0z" fill="#111" /><path d="m2 12 3-7 2 3 5-2 3 5-4 3 1 2-6-1z" fill="#fff" /></svg>
          <h1 className="text-[8px] text-black">Rhinoceros 7 Corporate - [Prospettica]</h1>
          <div className="ml-auto flex items-center gap-[22px] pr-[12px]">
            <button type="button" aria-label="Riduci a icona"><Minus size={8} strokeWidth={2} /></button>
            <button type="button" aria-label="Ripristina"><svg viewBox="0 0 8 8" className="size-2"><path d="M1 2.500h4.500V7H1zM2.500 2.500V1H7v4.500H5.500" fill="none" stroke="#111" strokeWidth=".9" /></svg></button>
            <button type="button" aria-label="Chiudi"><X size={10} strokeWidth={2} /></button>
          </div>
        </div>
        <nav className="flex h-[14px] items-center gap-[9px] pl-[5px] text-black">
          {menus.map((menu) => <button key={menu} type="button">{menu}</button>)}
        </nav>
      </header>

      <section className="flex flex-col border-t-2 border-[#e6e8ea] pb-[2px]">
        <div className="flex h-[13px] bg-white">
          <div className="flex h-[13px] flex-1 flex-col justify-end overflow-hidden pl-[5px] leading-[9px]">
            <p className="shrink-0">Offset delle superfici in corso... Premere Esc per cancellare</p>
            <p className="shrink-0">Creazione delle mesh in corso... Premere Esc per cancellare</p>
          </div>
          <div className="flex w-[12px] flex-col items-center justify-between bg-[#eef0f2]">
            <ChevronUp size={7} strokeWidth={3} />
            <ChevronDown size={7} strokeWidth={3} />
          </div>
        </div>
        <div className="mt-[2px] flex h-[11px] bg-white">
          <label htmlFor="command" className="pl-[5px] leading-[9px] font-bold text-black">Comando:</label>
          <span className="ml-[2px] h-[10px] w-px bg-black" />
          <input id="command" className="h-[11px] flex-1 outline-none" />
          <div className="flex w-[12px] flex-col items-center justify-between bg-[#e3e6e9]">
            <ChevronUp size={6} strokeWidth={4} />
            <ChevronDown size={6} strokeWidth={4} />
          </div>
        </div>
      </section>

      <div className="mt-[2px] flex h-[12px] items-center border-t border-[#dde1e4] bg-[#e6e9ec] pl-1">
        <div className="flex h-[12px] flex-1 items-center">
          {toolTabs.map((tab, i) => (
            <button key={tab} type="button"
              className={`h-[12px] px-[7px] text-[#43474b] ${i === 0 ? 'rounded-tl-md border-t border-r border-[#cdd2d7] bg-[#edf0f2] leading-[11px]' : 'border-b border-[#d0d5d9]'}`}>
              {tab}
            </button>
          ))}
          <span className="h-[12px] flex-1 border-b border-[#d0d5d9]" />
        </div>
        <button type="button" aria-label="Opzioni barra" className="pr-px text-[#8d9296]"><Settings size={10} strokeWidth={1.5} /></button>
      </div>
      <div className="flex h-[28px] items-start bg-[#edf0f2] pt-px pl-1">
        <div className="grid h-[20px] w-[915px] grid-cols-[repeat(49,1fr)]">
          {standardTools.map((tool) => <ToolButton key={tool.name} tool={tool} />)}
        </div>
      </div>

      <main className="flex flex-1">
        <div className="w-[45px] shrink-0 pt-1">
          <div className="grid h-[392px] w-[38px] grid-cols-2 grid-rows-[repeat(21,1fr)]">
            {sideTools.map((tool, i) => (tool ? <ToolButton key={`${tool.name}-${i}`} tool={tool} /> : <span key={i} />))}
          </div>
        </div>

        <div className="flex min-w-0 flex-1 flex-col">
          <div className="relative flex-1 bg-[#9ca3a9]">
            <div className="absolute inset-0"><Scene /></div>
            <div className="relative flex w-[60px] items-center bg-[#8290e0] text-[#1b2367]">
              <span className="h-[11px] flex-1 pl-[6px] leading-[11px] font-bold">{view}</span>
              <button type="button" aria-label="Menu vista" className="flex h-[9px] items-center border-l border-[#1b2367] px-[2px]">
                <svg viewBox="0 0 4 4" className="size-1"><path d="M0 1h4L2 4z" fill="currentColor" /></svg>
              </button>
            </div>
            <FloatingPalette />
          </div>
          <div className="flex h-[16px] items-start">
            {viewTabs.map((tab, i) => (
              <button key={tab} type="button" onClick={() => setView(tab)}
                className={`h-[14px] pt-px ${i === 0 ? 'mr-px rounded-bl-md border-r border-b border-[#c9ced3] pr-[3px] pl-[6px]' : 'px-[5px]'}`}>
                {tab}
              </button>
            ))}
            <button type="button" aria-label="Nuova vista" className="mt-1 ml-[2px] text-[#7a7f84]"><Plus size={8} strokeWidth={3} /></button>
          </div>
        </div>

        <PropertiesPanel />
      </main>

      <div className="flex h-[16px] items-center gap-1 border-t border-[#dfe2e5] pl-[6px]">
        {snaps.map((snap) => (
          <div key={snap.label} className="flex items-center gap-[2px]">
            <CheckBox id={`snap-${snap.label}`} checked={snap.on} disabled={snap.off} />
            <label htmlFor={`snap-${snap.label}`}>{snap.label}</label>
          </div>
        ))}
      </div>

      <footer>
        <div className="flex h-[14px] items-center border-t border-[#cfd4d9] bg-[#eef1f3] leading-[12px]">
          <button type="button" className="w-[34px] border-r border-[#d2d6da]">PianoC</button>
          <span className="w-[59px] border-r border-[#d2d6da] text-center">x -596.861</span>
          <span className="w-[59px] border-r border-[#d2d6da] text-center">y 1195.262</span>
          <span className="w-[59px] border-r border-[#d2d6da] text-center">z 0.000</span>
          <button type="button" className="w-[59px] border-r border-[#d2d6da]">Millimetri</button>
          <button type="button" className="flex w-[111px] items-center gap-[2px] border-r border-[#d2d6da] pl-px">
            <span className="size-[9px] bg-black" />Predefinito
          </button>
          {modes.map((mode) => (
            <button key={mode.label} type="button"
              className={`h-[13px] border-r border-[#d2d6da] px-1 ${mode.on ? 'bg-[#cfd5ec] font-bold' : ''}`}>
              {mode.label}
            </button>
          ))}
          <span className="pl-[2px]">Memoria fisica disponibile: 9430 MB</span>
        </div>
        <div className="h-[30px] border-t border-[#1d2a30] bg-black" />
      </footer>

      <div className="pointer-events-none absolute right-[34px] bottom-[52px] flex items-baseline leading-none italic [paint-order:stroke_fill] [-webkit-text-stroke:2px_#33371c]">
        <span className="text-[32px] text-[#dcea1e]">grafica</span>
        <span className="text-[36px] text-white">2d3d</span>
      </div>
    </div>
  );
}
